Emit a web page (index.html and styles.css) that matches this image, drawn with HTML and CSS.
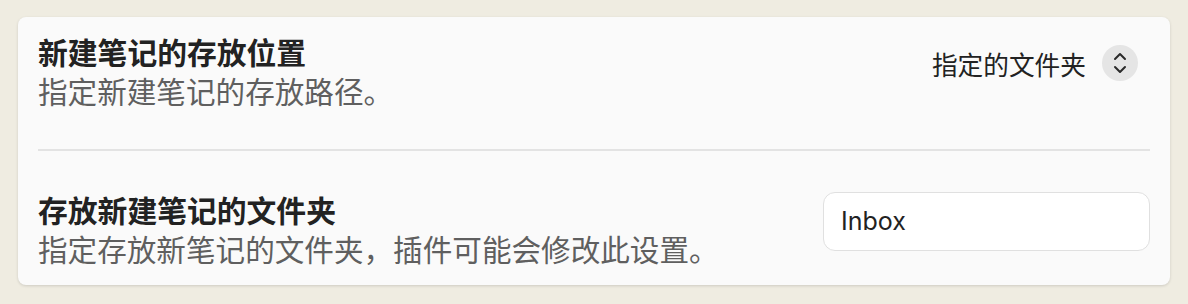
FILE: index.html
```html
<!DOCTYPE html>
<html lang="zh-CN">
<head>
  <meta charset="UTF-8" />
  <meta name="viewport" content="width=device-width, initial-scale=1.0"/>
  <title>设置</title>
  <link rel="stylesheet" href="styles.css">
</head>
<body>
  <div class="card">
    <div class="setting-item">
      <div class="setting-info">
        <div class="setting-name">新建笔记的存放位置</div>
        <div class="setting-desc">指定新建笔记的存放路径。</div>
      </div>
      <div class="setting-control">
        <div class="dropdown">
          <span class="dropdown-text">指定的文件夹</span>
          <span class="dropdown-icon">
            <svg width="14" height="22" viewBox="0 0 14 22" fill="none" stroke="#2a2a2a" stroke-width="2" stroke-linecap="round" stroke-linejoin="round">
              <polyline points="2,7 7,2 12,7" />
              <polyline points="2,15 7,20 12,15" />
            </svg>
          </span>
        </div>
      </div>
    </div>
    <div class="setting-item">
      <div class="setting-info">
        <div class="setting-name">存放新建笔记的文件夹</div>
        <div class="setting-desc">指定存放新笔记的文件夹，插件可能会修改此设置。</div>
      </div>
      <div class="setting-control">
        <input type="text" class="text-input" value="Inbox" />
      </div>
    </div>
  </div>
</body>
</html>
```

FILE: styles.css
```css
body {
  margin: 0;
  padding: 17px 18px 18px 18px;
  background-color: #efece1;
  font-family: "Inter", "Noto Sans", "Noto Sans CJK SC", sans-serif;
}

.card {
  background: #fafafa;
  border-radius: 8px;
  box-shadow: 0 1px 3px rgba(0,0,0,0.14);
  padding: 15px 20px 17px 20px;
}

.setting-item {
  display: flex;
  align-items: center;
  justify-content: space-between;
  padding: 39px 0;
  border-top: 2px solid #e3e3e3;
}

.setting-item:first-child {
  padding-top: 0;
  border-top: none;
}

.setting-item:last-child {
  padding-bottom: 0;
}

.setting-info {
  flex: 1;
}

.setting-name {
  font-family: "Noto Sans CJK SC", sans-serif;
  font-size: 29.8px;
  line-height: 39px;
  font-weight: 700;
  color: #222;
}

.setting-desc {
  font-family: "Noto Sans CJK SC", sans-serif;
  font-size: 29.6px;
  line-height: 39px;
  color: #5f5f5f;
}

.setting-control {
  margin-bottom: 16px;
}

.dropdown {
  display: flex;
  align-items: center;
  gap: 16px;
  padding-right: 12px;
}

.dropdown-text {
  font-family: "Noto Sans CJK SC", sans-serif;
  font-size: 25.7px;
  color: #222;
}

.dropdown-icon {
  width: 36px;
  height: 36px;
  border-radius: 50%;
  background: #e5e5e5;
  display: flex;
  align-items: center;
  justify-content: center;
}

.text-input {
  box-sizing: border-box;
  width: 327px;
  height: 59px;
  border: 1.5px solid #e0e0e0;
  border-radius: 12px;
  background: #fff;
  padding: 0 17px;
  font-family: "Inter", "Noto Sans", sans-serif;
  font-size: 25px;
  color: #222;
  outline: none;
}
```
